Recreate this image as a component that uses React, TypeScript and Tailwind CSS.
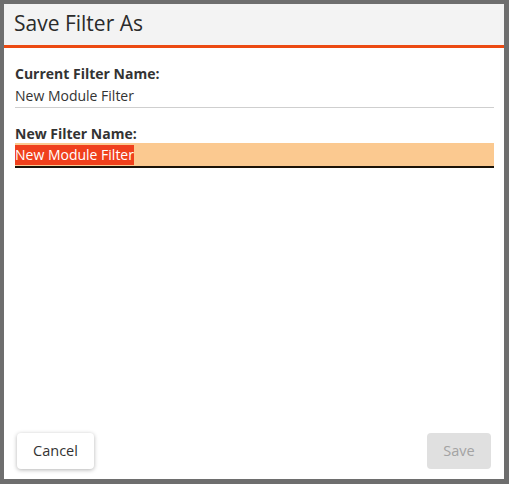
export default function App() {
  return (
    <div
      className="w-[509px] h-[484px] bg-[#6e6e6e] pt-[4px] pl-[4px] pr-[5px] pb-[5px]"
      style={{ fontFamily: '"Open Sans", "Noto Sans", sans-serif' }}
    >
      <div className="flex h-full flex-col bg-white">
        {/* Header */}
        <div className="flex h-[44px] shrink-0 items-center border-b-[3px] border-[#ec4a12] bg-[#f3f3f3] pl-[10px] pb-[1px]">
          <h1 className="text-[21px] text-[#2b2b2b]">Save Filter As</h1>
        </div>

        {/* Body */}
        <div className="flex-1 pl-[11px] pr-[10px] pt-[16px]">
          <div className="text-[14px] font-bold leading-[20px] text-[#333]">
            Current Filter Name:
          </div>
          <div className="mt-[2px] border-b border-[#cfcfcf] pb-[1px] text-[14px] leading-[20px] text-[#333]">
            New Module Filter
          </div>

          <div className="mt-[16px] text-[14px] font-bold leading-[19px] text-[#333]">
            New Filter Name:
          </div>
          <div className="flex h-[25px] items-center border-b-[2px] border-[#1a1208] bg-[#fbc990]">
            <span className="bg-[#f0401c] text-[14px] leading-[20px] text-white">
              New Module Filter
            </span>
          </div>
        </div>

        {/* Footer */}
        <div className="flex items-center justify-between px-[13px] pb-[10px]">
          <button className="h-[36px] w-[77px] rounded-[4px] bg-white text-[14.5px] text-[#333] shadow-[0_1px_4px_rgba(0,0,0,0.3)]">
            Cancel
          </button>
          <button className="h-[36px] w-[64px] rounded-[4px] bg-[#e0e0e0] text-[14.5px] text-[#a3a3a3]">
            Save
          </button>
        </div>
      </div>
    </div>
  );
}
